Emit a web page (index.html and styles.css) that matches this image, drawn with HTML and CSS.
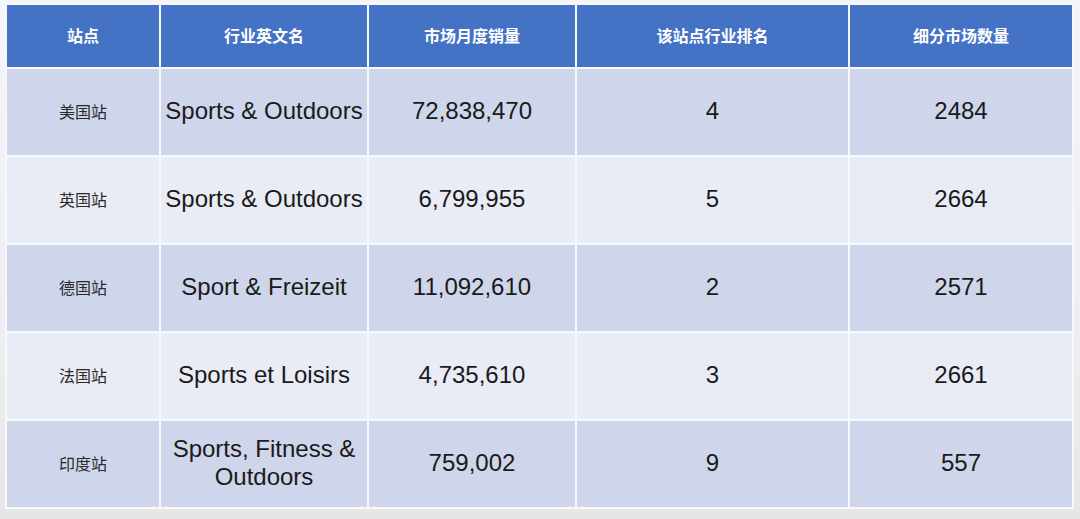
FILE: index.html
```html
<!DOCTYPE html>
<html lang="zh">
<head>
<meta charset="utf-8">
<title>站点行业数据</title>
<link rel="stylesheet" href="styles.css">
</head>
<body>
<div class="page">
  <table class="data">
    <colgroup>
      <col class="c1"><col class="c2"><col class="c3"><col class="c4"><col class="c5">
    </colgroup>
    <thead>
      <tr>
        <th>站点</th>
        <th>行业英文名</th>
        <th>市场月度销量</th>
        <th>该站点行业排名</th>
        <th>细分市场数量</th>
      </tr>
    </thead>
    <tbody>
      <tr class="odd">
        <td class="site">美国站</td>
        <td>Sports &amp; Outdoors</td>
        <td>72,838,470</td>
        <td>4</td>
        <td>2484</td>
      </tr>
      <tr class="even">
        <td class="site">英国站</td>
        <td>Sports &amp; Outdoors</td>
        <td>6,799,955</td>
        <td>5</td>
        <td>2664</td>
      </tr>
      <tr class="odd">
        <td class="site">德国站</td>
        <td>Sport &amp; Freizeit</td>
        <td>11,092,610</td>
        <td>2</td>
        <td>2571</td>
      </tr>
      <tr class="even">
        <td class="site">法国站</td>
        <td>Sports et Loisirs</td>
        <td>4,735,610</td>
        <td>3</td>
        <td>2661</td>
      </tr>
      <tr class="odd">
        <td class="site">印度站</td>
        <td class="wrap">Sports, Fitness &amp;<br>Outdoors</td>
        <td>759,002</td>
        <td>9</td>
        <td>557</td>
      </tr>
    </tbody>
  </table>
</div>
</body>
</html>
```

FILE: styles.css
```css
html, body {
  margin: 0;
  padding: 0;
  background: #e9e9ea;
}
.page {
  padding: 3px 0 0 5px;
  width: 1080px;
  height: 519px;
  box-sizing: border-box;
  background: linear-gradient(#f4f5f8 0%, #eeeff2 60%, #e6e6e7 100%);
}
.data {
  border-collapse: separate;
  border-spacing: 2px;
  background: #f7f8fb;
  table-layout: fixed;
  width: 1069px;
  font-family: "Liberation Sans", Arial, "Noto Sans CJK SC", sans-serif;
}
.c1 { width: 152px; }
.c2 { width: 206px; }
.c3 { width: 206px; }
.c4 { width: 271px; }
.c5 { width: 222px; }
.data th, .data td {
  padding: 0;
  text-align: center;
  vertical-align: middle;
}
.data th {
  height: 59px;
  padding-bottom: 3px;
  background: #4472c4;
  color: #ffffff;
  font-family: "Noto Sans CJK SC", "Liberation Sans", sans-serif;
  font-weight: 700;
  font-size: 16px;
}
.data td {
  height: 83px;
  padding-bottom: 3px;
  font-size: 24px;
  color: #1a1a1a;
}
.data tr.odd td { background: #cfd5ea; }
.data tr.even td { background: #e9ebf5; }
.data td.site {
  font-family: "Noto Sans CJK SC", "Liberation Sans", sans-serif;
  font-size: 16px;
  color: #2a2a2a;
}
.data td.wrap {
  line-height: 28px;
}
```
